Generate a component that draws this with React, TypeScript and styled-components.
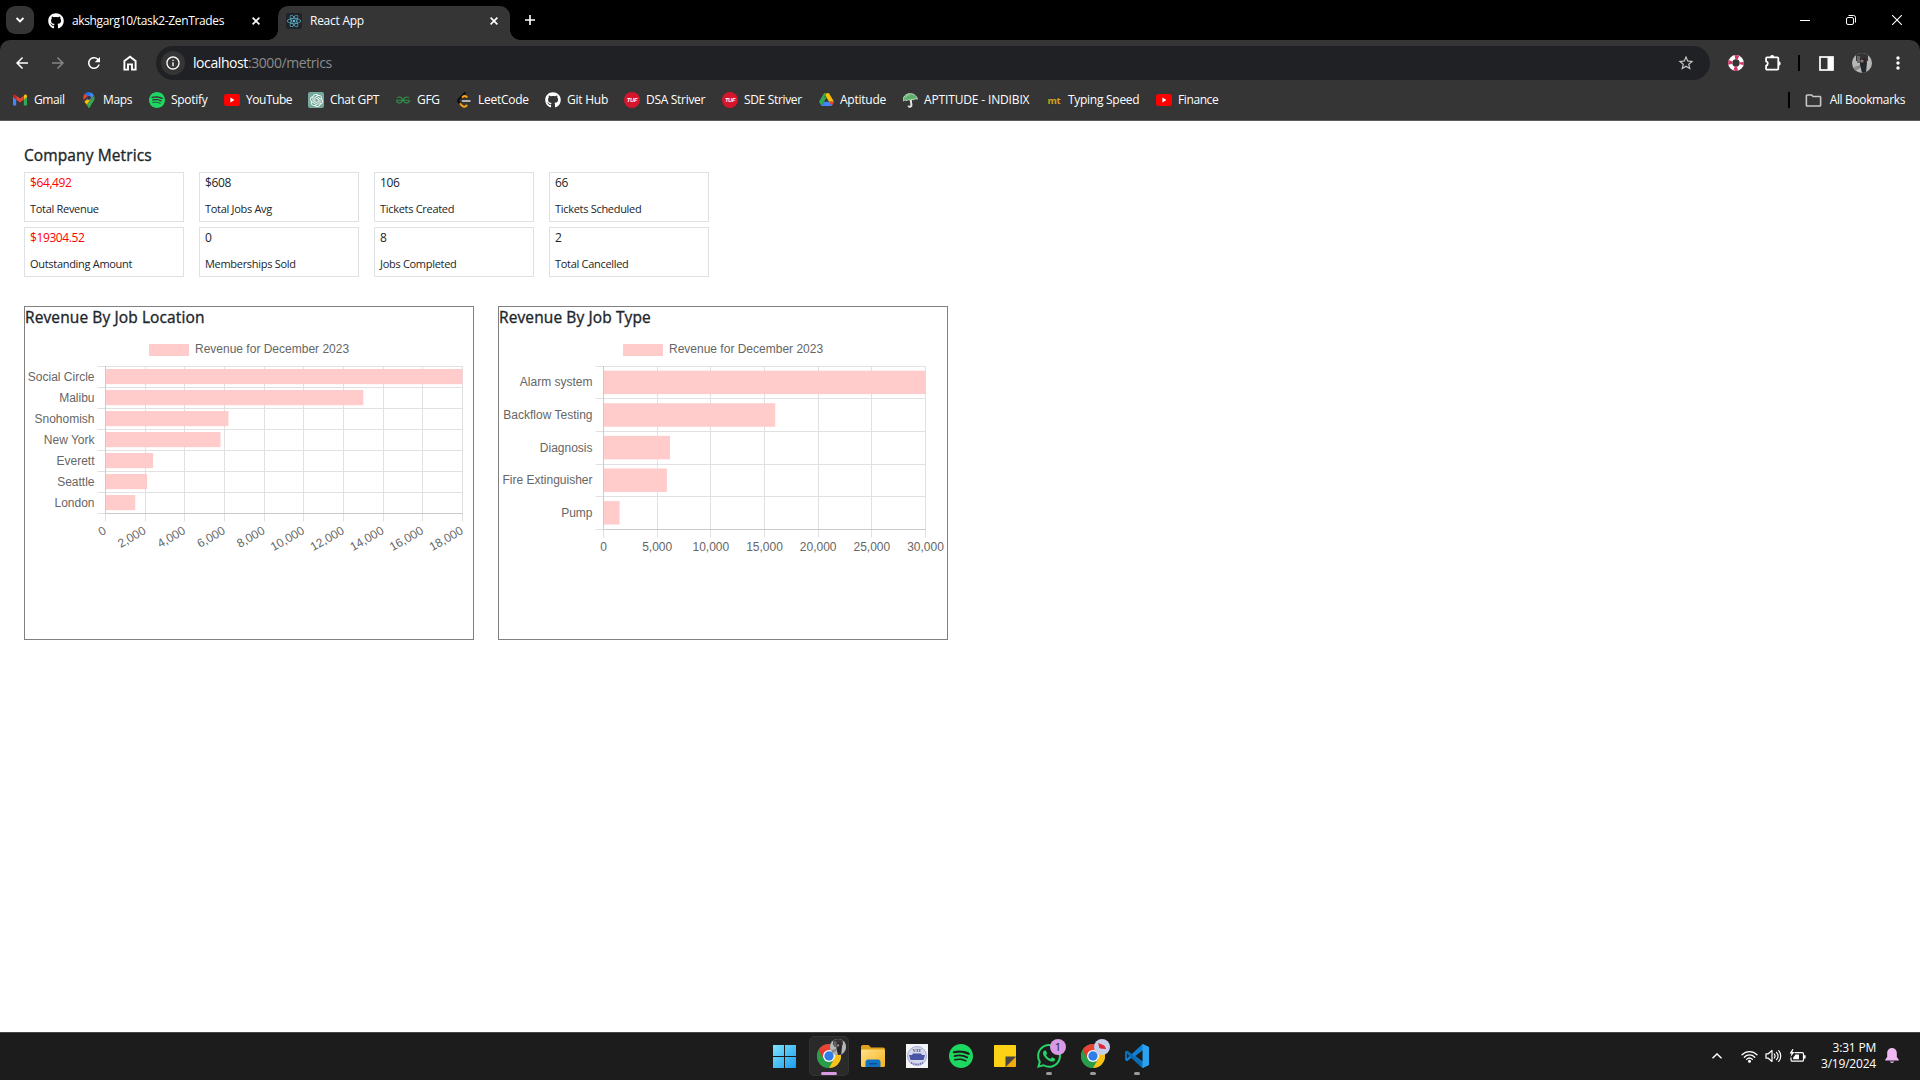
import React from "react";
import styled, { createGlobalStyle } from "styled-components";
import {
  MdArrowBack,
  MdArrowForward,
  MdRefresh,
  MdStarBorder,
  MdMoreVert,
  MdOutlineInfo,
  MdOutlineFolder,
} from "react-icons/md";
import { FaGithub, FaReact } from "react-icons/fa";
import { SiSpotify, SiOpenai, SiGeeksforgeeks, SiWhatsapp } from "react-icons/si";

const ui = `"Segoe UI", "Open Sans", "Noto Sans", sans-serif`;

const Global = createGlobalStyle`
  * { box-sizing: border-box; }
  body { margin: 0; background: #fff; font-family: ${ui}; overflow: hidden; }
  svg { display: block; flex: none; }
`;

const Screen = styled.div`
  width: 1920px;
  height: 1080px;
  display: flex;
  flex-direction: column;
`;

/* ---------- browser chrome ---------- */

const Browser = styled.header`
  background: #000;
  color: #fff;
`;

const TabStrip = styled.div`
  height: 40px;
  display: flex;
  align-items: flex-end;
  padding-left: 6px;
`;

const TabSearch = styled.div`
  width: 28px;
  height: 28px;
  margin-bottom: 6px;
  border-radius: 9px;
  background: #353535;
  display: grid;
  place-items: center;
`;

const Tab = styled.div<{ $active?: boolean }>`
  position: relative;
  height: 34px;
  width: ${(p) => (p.$active ? 232 : 244)}px;
  padding: ${(p) => (p.$active ? "0 12px 5px 8px" : "0 18px 5px 14px")};
  background: ${(p) => (p.$active ? "#353535" : "transparent")};
  border-radius: 10px 10px 0 0;
  display: flex;
  align-items: center;
  gap: 8px;

  &::before,
  &::after {
    content: "";
    display: ${(p) => (p.$active ? "block" : "none")};
    position: absolute;
    bottom: 0;
    width: 10px;
    height: 10px;
  }
  &::before {
    left: -10px;
    background: radial-gradient(circle at 0 0, transparent 9.5px, #353535 10px);
  }
  &::after {
    right: -10px;
    background: radial-gradient(circle at 100% 0, transparent 9.5px, #353535 10px);
  }
`;

const TabTitle = styled.span<{ $track: number }>`
  flex: 1;
  font-size: 12px;
  line-height: 16px;
  letter-spacing: ${(p) => p.$track}px;
  white-space: nowrap;
`;

const Favicon = styled.span<{ $bg?: string; $round?: string; $color?: string }>`
  width: 16px;
  height: 16px;
  flex: none;
  display: grid;
  place-items: center;
  background: ${(p) => p.$bg || "transparent"};
  border-radius: ${(p) => p.$round || "0"};
  color: ${(p) => p.$color || "#fff"};
`;

const NewTab = styled.div`
  width: 40px;
  height: 40px;
  display: grid;
  place-items: center;
`;

const WindowButtons = styled.div`
  margin-left: auto;
  display: flex;
`;

const WindowButton = styled.div`
  width: 46px;
  height: 40px;
  display: grid;
  place-items: center;
`;

const Toolbar = styled.div`
  height: 46px;
  background: #353535;
  border-radius: 10px 10px 0 0;
  display: flex;
  align-items: center;
  padding-left: 4px;
`;

const ToolButton = styled.div<{ $w?: number; $color?: string }>`
  width: ${(p) => p.$w || 36}px;
  height: 34px;
  display: grid;
  place-items: center;
  color: ${(p) => p.$color || "#fff"};
`;

const Omnibox = styled.div`
  width: 1554px;
  height: 34px;
  margin-left: 8px;
  padding: 0 15px 0 5px;
  border-radius: 17px;
  background: #202124;
  display: flex;
  align-items: center;
`;

const SiteInfo = styled.div`
  width: 24px;
  height: 24px;
  border-radius: 50%;
  background: #353535;
  display: grid;
  place-items: center;
`;

const Url = styled.span`
  flex: 1;
  margin-left: 8px;
  font-size: 14px;
  line-height: 20px;
  letter-spacing: -0.42px;
  color: #8b8c8e;

  b {
    font-weight: 400;
    color: #fff;
  }
`;

const Divider = styled.div`
  width: 2px;
  height: 16px;
  background: #000;
`;

const Avatar = styled.div<{ $size: number }>`
  width: ${(p) => p.$size}px;
  height: ${(p) => p.$size}px;
  border-radius: 50%;
  overflow: hidden;
`;

const BookmarkBar = styled.nav`
  height: 35px;
  padding: 0 15px 6px 12px;
  background: #353535;
  border-bottom: 1px solid #5c5c5c;
  display: flex;
  align-items: center;
`;

const Bookmark = styled.div<{ $w?: number; $track?: number }>`
  width: ${(p) => (p.$w ? `${p.$w}px` : "auto")};
  display: flex;
  align-items: center;
  gap: 6px;
  font-size: 12px;
  line-height: 16px;
  letter-spacing: ${(p) => p.$track ?? -0.3}px;
  white-space: nowrap;
`;

const AllBookmarks = styled.div`
  margin-left: auto;
  display: flex;
  align-items: center;
  font-size: 12px;
  line-height: 16px;
  letter-spacing: -0.36px;

  svg {
    margin: 0 7px 0 14px;
  }
`;

/* ---------- page ---------- */

const Page = styled.main`
  flex: 1;
  padding: 23px 24px 0;
  color: #212529;
`;

const Heading = styled.h6<{ $line?: number }>`
  margin: 0;
  height: 20px;
  font-size: 15.5px;
  line-height: ${(p) => p.$line ?? 22}px;
  font-weight: 400;
  letter-spacing: 0.11px;
  -webkit-text-stroke: 0.35px #212529;
  white-space: nowrap;
`;

const MetricGrid = styled.section`
  margin-top: 8px;
  display: grid;
  grid-template-columns: repeat(4, 160px);
  grid-auto-rows: 50px;
  gap: 5px 15px;
`;

const MetricCard = styled.div`
  border: 1px solid #dee2e6;
  padding: 1px 5px;
`;

const MetricValue = styled.div<{ $alert?: boolean }>`
  font-size: 12px;
  line-height: 18px;
  letter-spacing: -0.4px;
  color: ${(p) => (p.$alert ? "#ff0000" : "#212529")};
`;

const MetricLabel = styled.div`
  margin-top: 8px;
  font-size: 11px;
  line-height: 18px;
  letter-spacing: -0.3px;
`;

const Charts = styled.section`
  margin-top: 29px;
  display: flex;
  gap: 24px;
`;

const ChartBox = styled.div`
  width: 450px;
  height: 334px;
  border: 1px solid #808080;
`;

const ChartSvg = styled.svg`
  font-family: "Liberation Sans", Arial, Helvetica, sans-serif;
  font-size: 12px;
  fill: #666;
`;

/* ---------- taskbar ---------- */

const Taskbar = styled.footer`
  height: 48px;
  background: #1c1c1c;
  border-top: 1px solid #454545;
  color: #fff;
  display: flex;
  padding: 0 13px 1px 763px;
`;

const TaskCell = styled.div`
  width: 44px;
  height: 46px;
  display: grid;
  place-items: center;
`;

const TaskButton = styled.div<{ $active?: boolean }>`
  position: relative;
  width: 40px;
  height: 40px;
  border-radius: 5px;
  border: 1px solid ${(p) => (p.$active ? "#333" : "transparent")};
  background: ${(p) => (p.$active ? "#2a2a2a" : "transparent")};
  display: grid;
  place-items: center;
`;

const Indicator = styled.span<{ $active?: boolean }>`
  position: absolute;
  bottom: 0;
  left: 50%;
  transform: translateX(-50%);
  width: ${(p) => (p.$active ? 16 : 6)}px;
  height: 3px;
  border-radius: 2px;
  background: ${(p) => (p.$active ? "#d99be4" : "#9a9a9a")};
`;

const Badge = styled.span<{ $bg: string }>`
  position: absolute;
  top: 2px;
  right: 2px;
  width: 16px;
  height: 16px;
  border-radius: 50%;
  background: ${(p) => p.$bg};
  color: #1c1c1c;
  font-size: 11px;
  line-height: 16px;
  text-align: center;
  overflow: hidden;
`;

const Tray = styled.div`
  margin-left: auto;
  display: flex;
  align-items: center;
`;

const TrayItem = styled.div<{ $w: number }>`
  width: ${(p) => p.$w}px;
  display: grid;
  place-items: center;
`;

const Clock = styled.div`
  width: 69px;
  font-size: 12px;
  line-height: 16px;
  letter-spacing: -0.2px;
  text-align: right;
  white-space: nowrap;
`;

/* ---------- drawings ---------- */

const Cross = ({ s = 8 }: { s?: number }) => (
  <svg width={s} height={s} viewBox="0 0 8 8" stroke="#fff" strokeWidth="1.6">
    <path d="M.6 .6l6.8 6.8M7.4 .6L.6 7.4" />
  </svg>
);

const HomeIcon = () => (
  <svg width="14" height="16" viewBox="0 0 14 16" fill="none" stroke="#fff" strokeWidth="1.9">
    <path d="M1.4 14.6V6L7 1.8 12.6 6v8.6H9V9.4H5v5.2z" />
  </svg>
);

const Extension = () => (
  <svg width="18" height="18" viewBox="0 0 18 18">
    <path
      d="M3 3.4h10.4c.5 0 .9.4.9.9v10.4c0 .5-.4.9-.9.9H3c-.5 0-.9-.4-.9-.9v-3a2.2 2.2 0 0 0 0-4.3V4.3c0-.5.4-.9.9-.9z"
      fill="none"
      stroke="#fff"
      strokeWidth="1.8"
      strokeLinejoin="round"
    />
    <path d="M6 3.2a2.2 2.2 0 0 1 4.4 0zM14.5 7.3a2.2 2.2 0 0 1 0 4.4z" fill="#fff" />
  </svg>
);

const Photo = () => (
  <svg width="100%" height="100%" viewBox="0 0 20 20">
    <rect width="20" height="20" fill="#b7b7b7" />
    <rect x="4" width="12" height="8" fill="#343434" />
    <rect x="5" y="3" width="3" height="7" fill="#696969" />
    <path d="M8 6l5-1 2 4-1 11h-4L8 12z" fill="#24272e" />
    <circle cx="10" cy="8" r="1.6" fill="#9b7566" />
    <path d="M2 14l6-2v3l-5 3z" fill="#8a8a8a" />
  </svg>
);

const Gmail = () => (
  <svg width="14" height="12" viewBox="0 0 14 12">
    <path d="M0 2.2V10.4c0 .6.4 1 1 1h2.2V5.2z" fill="#4285f4" />
    <path d="M14 2.2V10.4c0 .6-.4 1-1 1h-2.2V5.2z" fill="#34a853" />
    <path d="M10.8 1.8v3.6L14 3V2c0-1.5-1.6-2-2.5-1.2z" fill="#fbbc04" />
    <path d="M3.2 5.4V1.8L7 4.6l3.8-2.8v3.6L7 8.4z" fill="#ea4335" />
    <path d="M0 2v1l3.2 2.4V1.8L2.5.8C1.6 0 0 .5 0 2z" fill="#c5221f" />
  </svg>
);

const MapsPin = () => (
  <svg width="12" height="16" viewBox="0 0 12 16">
    <path d="M6 0a5.6 5.6 0 0 0-4.4 2.1l3 2.6L8 .4A6 6 0 0 0 6 0z" fill="#1a73e8" />
    <path d="M1.6 2.1C.2 3.8 0 6 .8 8l3.8-4.3z" fill="#ea4335" />
    <path d="M8 .4L4.2 4.8a2.3 2.3 0 0 0 3.4 3L11 3.5A5.6 5.6 0 0 0 8 .4z" fill="#4285f4" />
    <path d="M4.3 7.2L1.4 9.4C2 10.5 3 11.6 3.8 12.8L11 3.5 7.7 7.3a2.3 2.3 0 0 1-3.4-.1z" fill="#fbbc04" />
    <path d="M11.2 4c1 3-.4 5.3-2 7.2C7.5 13.3 7 16 6 16s-1.2-1.7-2.2-3.2z" fill="#34a853" />
    <circle cx="6" cy="5.7" r="1.9" fill="#353535" />
  </svg>
);

const YouTube = () => (
  <svg width="16" height="12" viewBox="0 0 16 12">
    <rect width="16" height="12" rx="2.8" fill="#ff0000" />
    <path d="M6.4 3.6v4.8L10.4 6z" fill="#fff" />
  </svg>
);

const LeetCode = () => (
  <svg width="14" height="16" viewBox="0 0 14 16" fill="none" strokeLinecap="round" strokeWidth="1.9">
    <path d="M8 1L1.8 7.4c-.9.9-.9 2 0 2.9l1.4 1.5" stroke="#0a0a0a" />
    <path d="M9.8 5C8.2 3.7 6.6 4 5.6 5" stroke="#ffa116" />
    <path d="M3.4 12l1.8 1.8c1.3 1.2 3 1.1 4.4-.3" stroke="#ffa116" />
    <path d="M5.6 9h7.2" stroke="#b3b3b3" />
  </svg>
);

const Tuf = () => (
  <svg width="16" height="16" viewBox="0 0 16 16">
    <circle cx="8" cy="8" r="8" fill="#d5152c" />
    <text x="8" y="10" fontSize="5.8" fontWeight="700" fontStyle="italic" fill="#fff" textAnchor="middle" fontFamily="Liberation Sans, Arial, sans-serif">TUF</text>
  </svg>
);

const Drive = () => (
  <svg width="15" height="14" viewBox="0 0 15 14">
    <path d="M5 .3h5L4.7 9.2 2.5 13 0 8.8z" fill="#34a853" />
    <path d="M5 .3h5l5 8.5h-5z" fill="#fbbc04" />
    <path d="M5 .3h2.5L5 4.6 7.5 4z" fill="#188038" />
    <path d="M5 8.8h10L12.6 13H2.5z" fill="#4285f4" />
    <path d="M10.2 8.8H15L12.6 13z" fill="#ea4335" />
  </svg>
);

const Umbrella = () => (
  <svg width="15" height="15" viewBox="0 0 15 15">
    <g transform="rotate(-8 7.5 7.5)">
      <path d="M.5 7C0 3 3.5.5 7 .6c4 .1 7.3 2.6 7.5 6.6-1.5-1-2.7-1-3.7.2-1.2-1-2.3-1.1-3.3 0C6 6.2 5 6.2 4 7.2 3 6.2 1.6 6 .5 7z" fill="#5fae6b" stroke="#d9e8da" strokeWidth=".8" />
      <path d="M7.8 7v5.2c0 1.9-3 1.9-3 .2" fill="none" stroke="#dfe7df" strokeWidth="2" />
      <path d="M3 4c1-2 3-2.5 4.5-2.2" stroke="#8fd19a" fill="none" />
    </g>
  </svg>
);

const Mt = () => (
  <svg width="16" height="16" viewBox="0 0 16 16">
    <rect x="1" y="1" width="14" height="14" rx="3" fill="#323437" />
    <text x="8" y="11.5" fontSize="9.5" fontWeight="700" fill="#d3a411" textAnchor="middle" fontFamily="Open Sans, sans-serif">mt</text>
  </svg>
);

const Lifebuoy = () => (
  <svg width="16" height="16" viewBox="0 0 16 16" fill="none">
    <circle cx="8" cy="8" r="5.8" stroke="#fff" strokeWidth="4.2" />
    <circle cx="8" cy="8" r="5.8" stroke="#d23a68" strokeWidth="4.2" strokeDasharray="3.6 5.51" strokeDashoffset="1.8" />
  </svg>
);

const Chrome = () => (
  <svg width="24" height="24" viewBox="0 0 24 24">
    <circle cx="12" cy="12" r="12" fill="#34a853" />
    <path d="M12 12L1.6 6A12 12 0 0 1 22.4 6z" fill="#ea4335" />
    <path d="M1.6 6A12 12 0 0 0 12 24l5-9H8z" fill="#2a9d48" />
    <path d="M12 6h10.4A12 12 0 0 1 12 24l5.2-9z" fill="#fbc116" />
    <path d="M1.6 6L6.8 15 12 12V6z" fill="#e33b2e" />
    <circle cx="12" cy="12" r="6" fill="#fff" />
    <circle cx="12" cy="12" r="4.7" fill="#2f7de9" />
  </svg>
);

const WindowsLogo = () => (
  <svg width="24" height="24" viewBox="0 0 24 24">
    <defs>
      <linearGradient id="win" x1="0" y1="0" x2="1" y2="1">
        <stop offset="0" stopColor="#7fe3fb" />
        <stop offset="1" stopColor="#1a9dee" />
      </linearGradient>
    </defs>
    <path fill="url(#win)" d="M0 1h11v11H0zM12 1h11v11H12zM0 13h11v11H0zM12 13h11v11H12z" />
  </svg>
);

const Explorer = () => (
  <svg width="24" height="22" viewBox="0 0 24 22">
    <defs>
      <linearGradient id="fold" x1="0" y1="0" x2="1" y2="1">
        <stop offset="0" stopColor="#ffe08a" />
        <stop offset="1" stopColor="#f5b31c" />
      </linearGradient>
    </defs>
    <path d="M0 2C0 .8.8 0 2 0h5.5l2.5 2.5H22c1.2 0 2 .8 2 2V8H0z" fill="#e0a21b" />
    <rect y="4.5" width="24" height="17.5" rx="1.5" fill="url(#fold)" />
    <path d="M4.5 22v-5c0-1.5 1-2.5 2.5-2.5h10c1.5 0 2.5 1 2.5 2.5v5z" fill="#1272c4" />
    <rect x="8" y="18" width="8" height="1.5" rx=".7" fill="#0b4f91" />
  </svg>
);

const VitSeal = () => (
  <svg width="22" height="24" viewBox="0 0 22 24">
    <rect width="22" height="24" fill="#f3f3f8" />
    <circle cx="11" cy="12" r="9.5" fill="#d5d7ea" stroke="#a8acd0" strokeWidth="1" />
    <text x="11" y="8" fontSize="5" fontWeight="700" textAnchor="middle" fill="#4a4f91" fontFamily="Liberation Serif, serif">VIT</text>
    <path d="M3 11h3l1-1.5h8L16 11h3l-1.5 5h-13z" fill="#4a55a5" />
    <path d="M5 18.5c4 2.5 8 2.5 12 0" stroke="#6a72b3" strokeWidth="1.5" fill="none" strokeDasharray="1.5 .8" />
  </svg>
);

const StickyNote = () => (
  <svg width="22" height="22" viewBox="0 0 22 22">
    <path d="M1 0h20c.6 0 1 .4 1 1v10.5L11.5 22H1c-.6 0-1-.4-1-1V1c0-.6.4-1 1-1z" fill="#fcd116" />
    <path d="M22 11.5V21c0 .6-.4 1-1 1h-9.5z" fill="#efaa0c" />
    <path d="M11.5 11.5H22L11.5 22z" fill="#454545" />
  </svg>
);

const VsCode = () => (
  <svg width="24" height="24" viewBox="0 0 24 24">
    <path d="M17.5 0L24 3v18l-6.5 3L6.6 13.8 2.2 17.2.2 16.2V7.8l2-1 4.4 3.4z" fill="#0f80cf" />
    <path d="M2.2 6.8l15.3 12V24L.2 8.6v-.8z" fill="#0b6cb4" />
    <path d="M17.5 0L24 3v18l-6.5 3z" fill="#2aa4f0" />
    <path d="M17.5 6.5v11L10.3 12z" fill="#1c1c1c" />
    <path d="M1.8 9.6v4.8L4.3 12z" fill="#1c1c1c" />
  </svg>
);

const Bird = () => (
  <svg width="16" height="16" viewBox="0 0 16 16">
    <path d="M4 4l4 1.5c2 .2 3 1.7 4.2 4.5l-3.8-.3C6.5 10 4.5 9 5 7z" fill="#e32636" />
  </svg>
);

const Wifi = () => (
  <svg width="17" height="13" viewBox="0 0 17 13" fill="none" stroke="#fff" strokeWidth="1.3" strokeLinecap="round">
    <path d="M1 4.8c4.2-4.3 10.8-4.3 15 0M3.3 7.2c2.9-3 7.5-3 10.4 0M5.6 9.4c1.7-1.7 4.1-1.7 5.8 0" />
    <circle cx="8.5" cy="11.3" r=".9" fill="#fff" />
  </svg>
);

const Speaker = () => (
  <svg width="17" height="14" viewBox="0 0 17 14" fill="none" stroke="#fff" strokeWidth="1.2" strokeLinecap="round" strokeLinejoin="round">
    <path d="M1 4.8h2.3L7 1.5v11L3.3 9.2H1zM9.3 5c.9 1.2.9 2.8 0 4M11.5 3.3c1.9 2.2 1.9 5.2 0 7.4M13.7 1.7c2.7 3 2.7 7.6 0 10.6" />
  </svg>
);

const Battery = () => (
  <svg width="17" height="14" viewBox="0 0 17 14" fill="none" stroke="#fff" strokeWidth="1.2">
    <path d="M5.5 3.6h7.7c.8 0 1.3.5 1.3 1.3v6c0 .8-.5 1.3-1.3 1.3H3.3c-.8 0-1.3-.5-1.3-1.3V8.5" />
    <path d="M15.8 6.3v3.2" strokeWidth="1.6" />
    <path d="M6.5 5.5H10v4.8H4.2V8.5z" fill="#fff" stroke="none" />
    <path d="M3.5 0L.5 4.5h2L1.5 8l4-5H3.3L4.5 0z" fill="#fff" stroke="none" />
  </svg>
);

const Bell = () => (
  <svg width="14" height="16" viewBox="0 0 14 16" fill="#efb8f3">
    <path d="M7 0c2.9 0 4.8 2.2 4.8 5v4l1.9 2.6c.3.5.1 1-.5 1H.8c-.6 0-.8-.5-.5-1L2.2 9V5C2.2 2.2 4.1 0 7 0zM4.8 13.6h4.4c-.4 1.9-4 1.9-4.4 0z" />
  </svg>
);

/* ---------- charts ---------- */

type ChartProps = {
  data: [string, number][];
  max: number;
  step: number;
  left: number;
  right: number;
  bottom: number;
  rotate?: boolean;
};

const TOP = 39.5;

/* Horizontal bar chart; coordinates are relative to the area under the title. */
function BarChart({ data, max, step, left, right, bottom, rotate }: ChartProps) {
  const row = (bottom - TOP) / data.length;
  const x = (v: number) => left + (v / max) * (right - left);
  const ticks = Array.from({ length: max / step + 1 }, (_, i) => i * step);
  const crisp = (v: number) => Math.floor(v) + 0.5;
  return (
    <ChartSvg width="448" height="300" viewBox="0 0 448 300">
      <rect x="124" y="17" width="40" height="12" fill="#ffcbcb" />
      <text x="170" y="26">Revenue for December 2023</text>
      <g stroke="#e1e1e1">
        {ticks.map((t) => (
          <path key={t} d={`M${crisp(x(t))} ${TOP - 0.5}V${bottom + 8}`} />
        ))}
        {data.map((_, i) => (
          <path key={i} d={`M${left - 8} ${crisp(TOP + row * i - 0.3 * Math.sign(i))}H${right + 0.5}`} />
        ))}
        <path d={`M${left - 8} ${bottom}H${left}`} />
      </g>
      {data.map(([name, v], i) => (
        <React.Fragment key={name}>
          <rect x={left} y={TOP + row * (i + 0.14) - 0.4} width={x(v) - left} height={row * 0.72} fill="#ffcbcb" />
          <text x={left - 11} y={Math.round(TOP + row * (i + 0.5) - 0.45) + 3.5} textAnchor="end">
            {name}
          </text>
        </React.Fragment>
      ))}
      <path d={`M${left} ${TOP - 0.5}V${bottom}M${left} ${bottom}H${right + 0.5}`} stroke="#cacaca" fill="none" />
      {ticks.map((t) =>
        rotate ? (
          <text key={t} textAnchor="end" transform={`translate(${x(t) + 1.5} ${bottom + 19.5}) rotate(-30)`}>
            {t.toLocaleString("en-US")}
          </text>
        ) : (
          <text key={t} x={x(t)} y={bottom + 21.5} textAnchor="middle">
            {t.toLocaleString("en-US")}
          </text>
        )
      )}
    </ChartSvg>
  );
}

const byLocation: [string, number][] = [
  ["Social Circle", 18000],
  ["Malibu", 13000],
  ["Snohomish", 6200],
  ["New York", 5800],
  ["Everett", 2400],
  ["Seattle", 2100],
  ["London", 1500],
];

const byType: [string, number][] = [
  ["Alarm system", 30000],
  ["Backflow Testing", 16000],
  ["Diagnosis", 6200],
  ["Fire Extinguisher", 5900],
  ["Pump", 1500],
];

const metrics: { value: string; label: string; alert?: boolean }[] = [
  { value: "$64,492", label: "Total Revenue", alert: true },
  { value: "$608", label: "Total Jobs Avg" },
  { value: "106", label: "Tickets Created" },
  { value: "66", label: "Tickets Scheduled" },
  { value: "$19304.52", label: "Outstanding Amount", alert: true },
  { value: "0", label: "Memberships Sold" },
  { value: "8", label: "Jobs Completed" },
  { value: "2", label: "Total Cancelled" },
];

const bookmarks: { name: string; w: number; icon: React.ReactNode; bg?: string; round?: string; color?: string; track?: number }[] = [
  { name: "Gmail", w: 69, icon: <Gmail />, track: -0.4 },
  { name: "Maps", w: 68, icon: <MapsPin />, track: -0.36 },
  { name: "Spotify", w: 75, icon: <SiSpotify size={16} />, color: "#1ed760" },
  { name: "YouTube", w: 84, icon: <YouTube />, track: -0.46 },
  { name: "Chat GPT", w: 87, icon: <SiOpenai size={13} />, bg: "#74a99b", round: "2px" },
  { name: "GFG", w: 61, icon: <SiGeeksforgeeks size={14} />, color: "#2f8d46" },
  { name: "LeetCode", w: 89, icon: <LeetCode />, track: -0.26 },
  { name: "Git Hub", w: 79, icon: <FaGithub size={16} />, track: -0.24 },
  { name: "DSA Striver", w: 98, icon: <Tuf /> },
  { name: "SDE Striver", w: 96, icon: <Tuf />, track: -0.34 },
  { name: "Aptitude", w: 84, icon: <Drive />, track: -0.24 },
  { name: "APTITUDE - INDIBIX", w: 144, icon: <Umbrella />, track: -0.15 },
  { name: "Typing Speed", w: 110, icon: <Mt />, track: -0.28 },
  { name: "Finance", w: 70, icon: <YouTube />, track: -0.4 },
];

export default function App() {
  return (
    <Screen>
      <Global />
      <Browser>
        <TabStrip>
          <TabSearch>
            <svg width="8" height="6" viewBox="0 0 8 6" fill="none" stroke="#fff" strokeWidth="1.8">
              <path d="M.6 1L4 4.4 7.4 1" />
            </svg>
          </TabSearch>
          <Tab>
            <Favicon><FaGithub size={16} /></Favicon>
            <TabTitle $track={-0.36}>akshgarg10/task2-ZenTrades</TabTitle>
            <Cross />
          </Tab>
          <Tab $active>
            <Favicon $bg="#20232a" $round="2px" $color="#61bfd8"><FaReact size={14} /></Favicon>
            <TabTitle $track={-0.26}>React App</TabTitle>
            <Cross />
          </Tab>
          <NewTab>
            <svg width="10" height="10" viewBox="0 0 10 10" stroke="#fff" strokeWidth="1.6">
              <path d="M5 0v10M0 5h10" />
            </svg>
          </NewTab>
          <WindowButtons>
            <WindowButton>
              <svg width="10" height="10" stroke="#fff"><path d="M0 5.5h10" /></svg>
            </WindowButton>
            <WindowButton>
              <svg width="10" height="10" viewBox="0 0 10 10" fill="none" stroke="#fff">
                <rect x=".5" y="2.5" width="7" height="7" rx="1.5" />
                <path d="M2.5 .5h5a2 2 0 0 1 2 2v5" />
              </svg>
            </WindowButton>
            <WindowButton>
              <svg width="10" height="10" viewBox="0 0 10 10" stroke="#fff" strokeWidth="1.1"><path d="M0 0l10 10M10 0L0 10" /></svg>
            </WindowButton>
          </WindowButtons>
        </TabStrip>
        <Toolbar>
          <ToolButton><MdArrowBack size={18} /></ToolButton>
          <ToolButton $color="#858585"><MdArrowForward size={18} /></ToolButton>
          <ToolButton><MdRefresh size={18} /></ToolButton>
          <ToolButton><HomeIcon /></ToolButton>
          <Omnibox>
            <SiteInfo><MdOutlineInfo size={16} /></SiteInfo>
            <Url><b>localhost</b>:3000/metrics</Url>
            <MdStarBorder size={18} color="#c7c7c7" />
          </Omnibox>
          <ToolButton $w={52}><Lifebuoy /></ToolButton>
          <ToolButton $w={22}><Extension /></ToolButton>
          <ToolButton $w={30}><Divider /></ToolButton>
          <ToolButton $w={24}>
            <svg width="15" height="15" viewBox="0 0 15 15">
              <rect x="1" y="1" width="13" height="13" fill="none" stroke="#fff" strokeWidth="1.7" />
              <rect x="8.5" y="1" width="5.5" height="13" fill="#fff" />
            </svg>
          </ToolButton>
          <ToolButton $w={48}><Avatar $size={20}><Photo /></Avatar></ToolButton>
          <ToolButton $w={24}><MdMoreVert size={20} /></ToolButton>
        </Toolbar>
        <BookmarkBar>
          {bookmarks.map((b) => (
            <Bookmark key={b.name} $w={b.w} $track={b.track}>
              <Favicon $bg={b.bg} $round={b.round} $color={b.color}>{b.icon}</Favicon>
              {b.name}
            </Bookmark>
          ))}
          <AllBookmarks>
            <Divider />
            <MdOutlineFolder size={19} color="#c7c7c7" />
            All Bookmarks
          </AllBookmarks>
        </BookmarkBar>
      </Browser>

      <Page>
        <Heading>Company Metrics</Heading>
        <MetricGrid>
          {metrics.map((m) => (
            <MetricCard key={m.label}>
              <MetricValue $alert={m.alert}>{m.value}</MetricValue>
              <MetricLabel>{m.label}</MetricLabel>
            </MetricCard>
          ))}
        </MetricGrid>
        <Charts>
          <ChartBox>
            <Heading $line={20}>Revenue By Job Location</Heading>
            <BarChart data={byLocation} max={18000} step={2000} left={80.5} right={437.5} bottom={186.5} rotate />
          </ChartBox>
          <ChartBox>
            <Heading $line={20}>Revenue By Job Type</Heading>
            <BarChart data={byType} max={30000} step={5000} left={104.5} right={426.5} bottom={202.5} />
          </ChartBox>
        </Charts>
      </Page>

      <Taskbar>
        <TaskCell><TaskButton><WindowsLogo /></TaskButton></TaskCell>
        <TaskCell>
          <TaskButton $active>
            <Chrome />
            <Badge $bg="#777"><Photo /></Badge>
            <Indicator $active />
          </TaskButton>
        </TaskCell>
        <TaskCell><TaskButton><Explorer /></TaskButton></TaskCell>
        <TaskCell><TaskButton><VitSeal /></TaskButton></TaskCell>
        <TaskCell><TaskButton><SiSpotify size={24} color="#1ed760" /></TaskButton></TaskCell>
        <TaskCell><TaskButton><StickyNote /></TaskButton></TaskCell>
        <TaskCell>
          <TaskButton>
            <SiWhatsapp size={24} color="#25d366" />
            <Badge $bg="#d99be4">1</Badge>
            <Indicator />
          </TaskButton>
        </TaskCell>
        <TaskCell>
          <TaskButton>
            <Chrome />
            <Badge $bg="#c5cdea"><Bird /></Badge>
            <Indicator />
          </TaskButton>
        </TaskCell>
        <TaskCell>
          <TaskButton><VsCode /><Indicator /></TaskButton>
        </TaskCell>
        <Tray>
          <TrayItem $w={44}>
            <svg width="10" height="6" viewBox="0 0 10 6" fill="none" stroke="#fff" strokeWidth="1.4"><path d="M.5 5.3L5 .9l4.5 4.4" /></svg>
          </TrayItem>
          <TrayItem $w={20}><Wifi /></TrayItem>
          <TrayItem $w={28}><Speaker /></TrayItem>
          <TrayItem $w={20}><Battery /></TrayItem>
          <Clock>
            3:31 PM
            <br />
            3/19/2024
          </Clock>
          <TrayItem $w={31}><Bell /></TrayItem>
        </Tray>
      </Taskbar>
    </Screen>
  );
}
